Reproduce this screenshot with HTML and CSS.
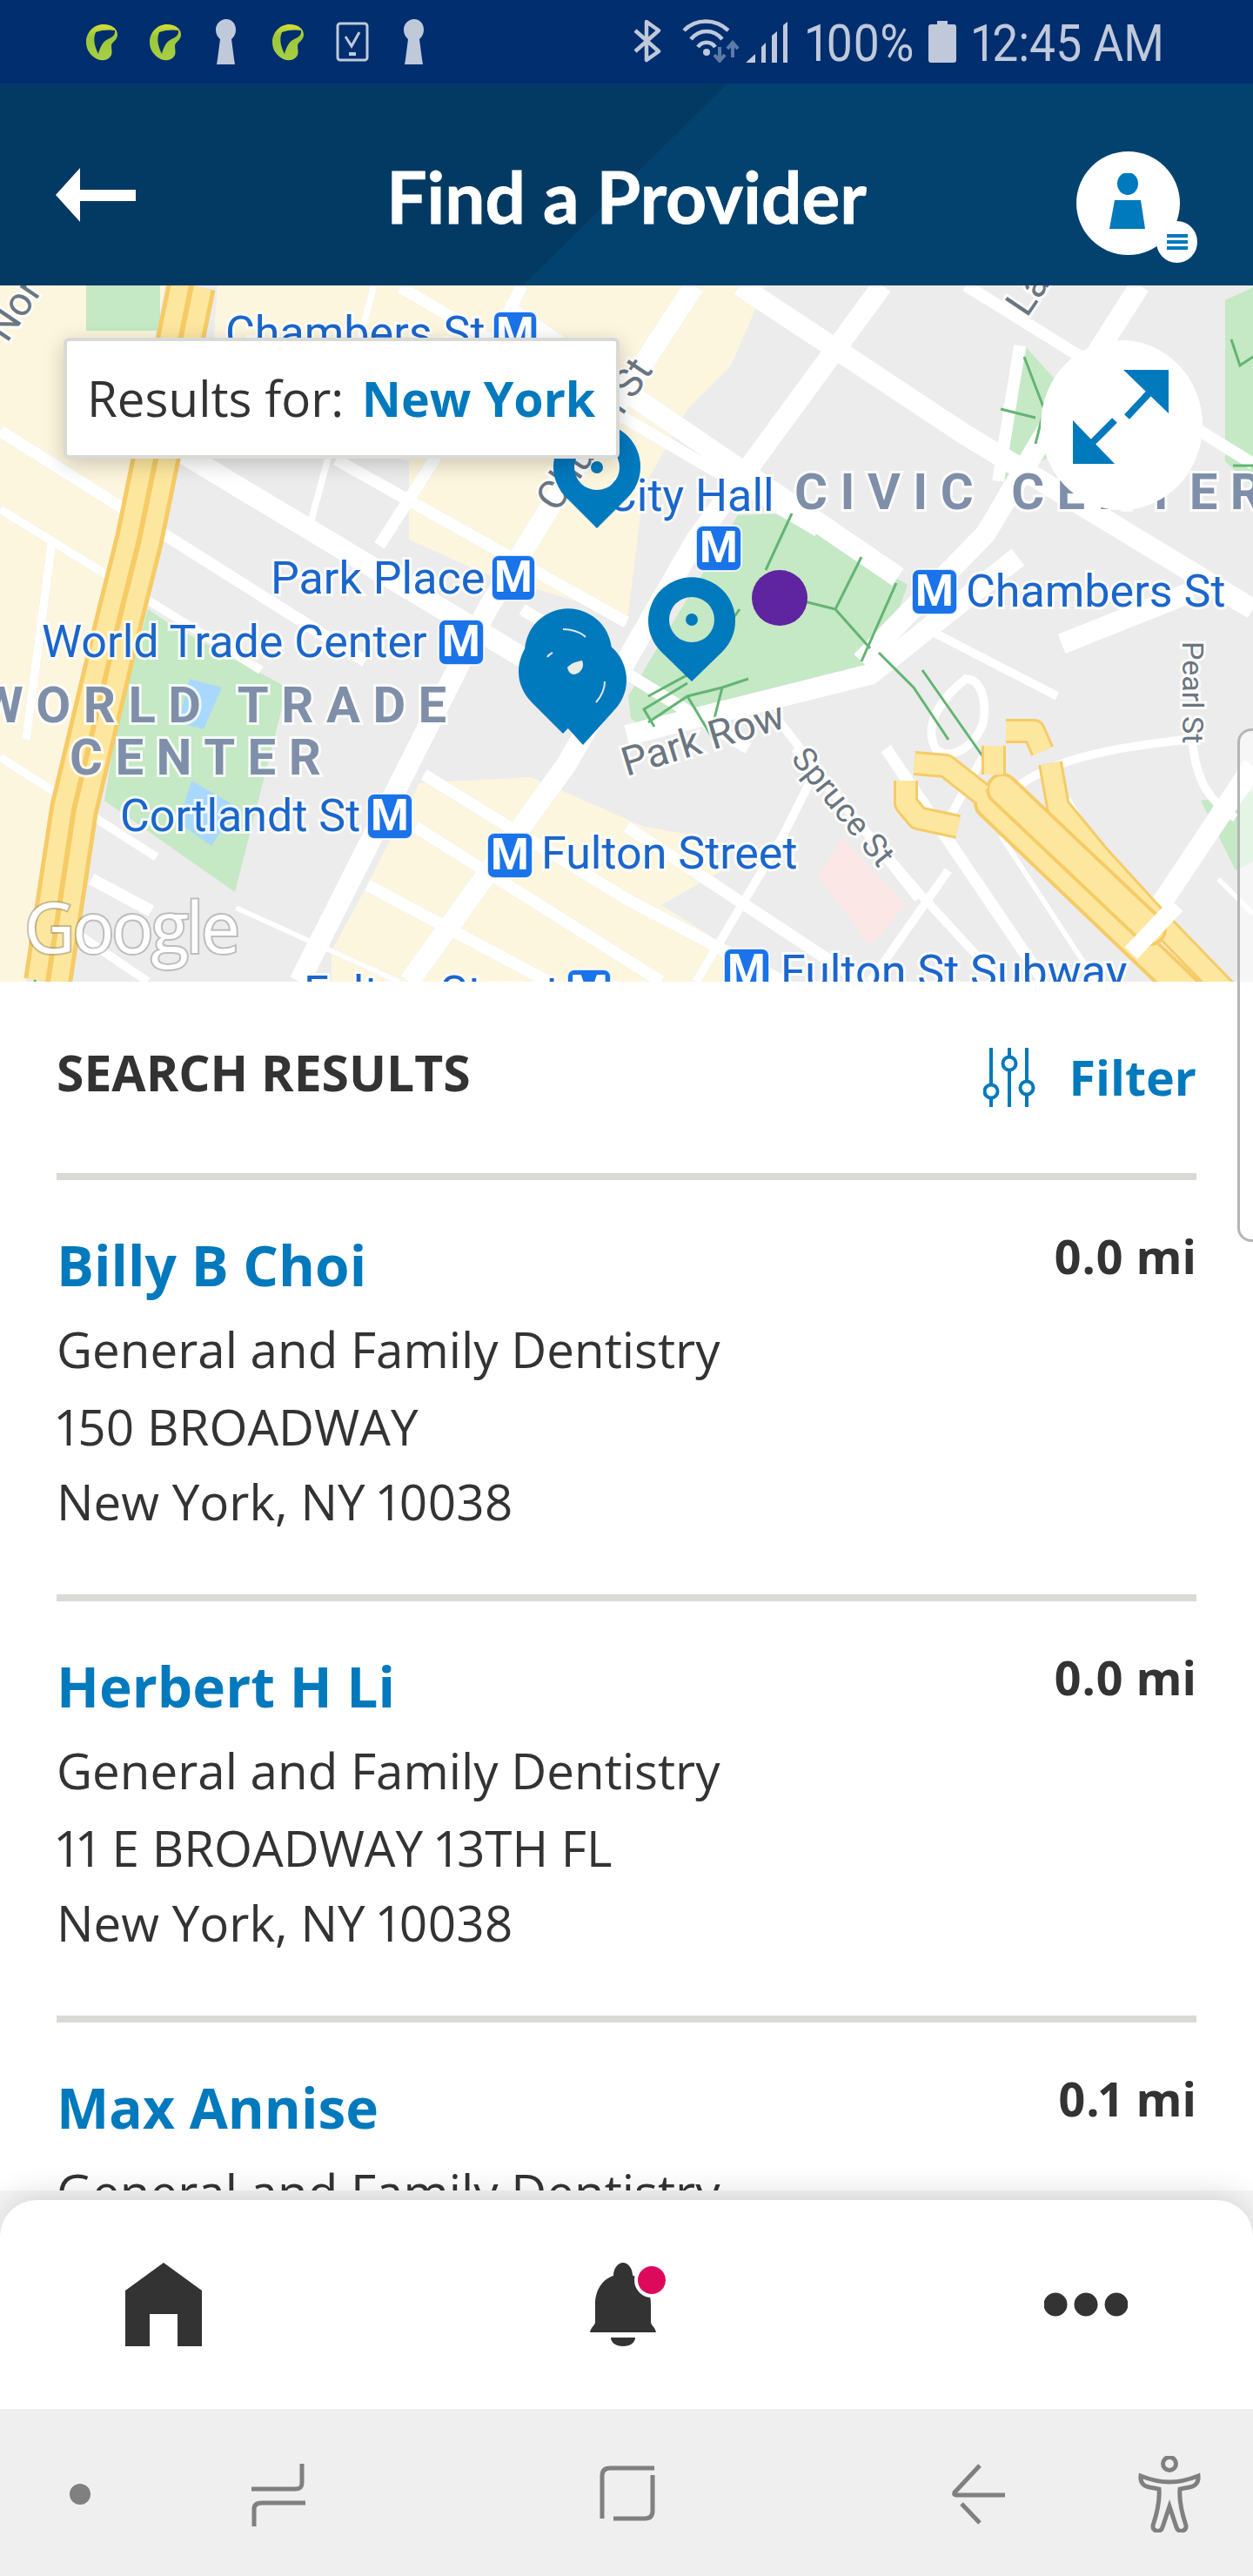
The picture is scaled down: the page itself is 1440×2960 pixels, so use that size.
FILE: index.html
```html
<!DOCTYPE html>
<html lang="en">
<head>
  <meta charset="UTF-8">
  <title>Find a Provider</title>
  <link rel="stylesheet" href="styles.css">
</head>
<body>
<div class="phone">

  <!-- status bar -->
  <div class="status">
    <div class="status-left">
      <svg class="st-swirl" viewBox="0 0 36 42"><defs><linearGradient id="leaf" x1="0" y1="0" x2="0" y2="1"><stop offset="0" stop-color="#d6e033"/><stop offset=".35" stop-color="#9cc63a"/><stop offset="1" stop-color="#a9cf45"/></linearGradient></defs><path class="swirl" d="M20 0C30 0 36 5 36 12 36 18 30 20 29 24 29 30 31 34 27 38 22 43 14 42 8 37 2 32 0 26 0 20 0 10 8 0 20 0z"/><path class="swirl-in" d="M11 9C18 6 28 6 33 7 34 13 29 15 25 17 19 20 16 26 14 34 11 28 7 18 11 9z"/></svg>
      <svg class="st-swirl" viewBox="0 0 36 42"><path class="swirl" d="M20 0C30 0 36 5 36 12 36 18 30 20 29 24 29 30 31 34 27 38 22 43 14 42 8 37 2 32 0 26 0 20 0 10 8 0 20 0z"/><path class="swirl-in" d="M11 9C18 6 28 6 33 7 34 13 29 15 25 17 19 20 16 26 14 34 11 28 7 18 11 9z"/></svg>
      <svg class="st-key" viewBox="0 0 30 52"><path d="M15 0c7 0 11 6 11 12 0 6-3 9-5 11l3 23 1 6H4l1-6 3-23c-2-2-5-5-5-11C3 6 8 0 15 0z"/></svg>
      <svg class="st-swirl" viewBox="0 0 36 42"><path class="swirl" d="M20 0C30 0 36 5 36 12 36 18 30 20 29 24 29 30 31 34 27 38 22 43 14 42 8 37 2 32 0 26 0 20 0 10 8 0 20 0z"/><path class="swirl-in" d="M11 9C18 6 28 6 33 7 34 13 29 15 25 17 19 20 16 26 14 34 11 28 7 18 11 9z"/></svg>
      <svg class="st-check" viewBox="0 0 38 46"><rect x="2" y="2" width="34" height="42" rx="3"/><path d="M11 17l7 11 9-16"/><rect class="st-fill" x="15" y="35" width="8" height="4"/></svg>
      <svg class="st-key" viewBox="0 0 30 52"><path d="M15 0c7 0 11 6 11 12 0 6-3 9-5 11l3 23 1 6H4l1-6 3-23c-2-2-5-5-5-11C3 6 8 0 15 0z"/></svg>
    </div>
    <div class="status-right">
      <svg class="st-bt" viewBox="0 0 32 50"><path d="M2 13L29 37 15 47V3L29 13 2 37"/></svg>
      <svg class="st-wifi" viewBox="0 0 66 50"><path d="M3 13C17-1 39-1 54 13M11 23C21 11 37 11 47 23M19 32C24 25 34 25 39 32"/><circle class="st-fill" cx="29" cy="38" r="4"/><path class="st-arrows" d="M44 32V48M38 41L44 48 50 41M59 44V28M53 34L59 27 65 34"/></svg>
      <svg class="st-signal" viewBox="0 0 48 48"><path d="M0 48L11 38V48zM18 48V30L23 25V48zM30 48V17L36 12V48zM43 48V5L48 1V48z"/></svg>
      <span class="st-text st-pct">100%</span>
      <svg class="st-batt" viewBox="0 0 32 48"><path d="M10 0h12v4h7c2 0 3 1 3 3v38c0 2-1 3-3 3H3c-2 0-3-1-3-3V7c0-2 1-3 3-3h7z"/></svg>
      <span class="st-text st-time">12:45 AM</span>
    </div>
  </div>

  <!-- app header -->
  <header class="topbar">
    <svg class="back" viewBox="0 0 92 62"><path d="M28 0L0 31l28 31V38h64V25H28z"/></svg>
    <h1>Find a Provider</h1>
    <div class="avatar">
      <svg viewBox="0 0 42 64"><ellipse cx="21" cy="12" rx="12" ry="13"/><path d="M6 31h30l5 33H0z"/></svg>
      <span class="avatar-badge"><i></i><i></i><i></i></span>
    </div>
  </header>

  <!-- map -->
  <section class="map">
    <svg class="map-svg" viewBox="0 328 1440 800">
      <defs>
        <g id="roads">
          <path class="w14" d="M0 495L420 760"/>
          <path class="w24" d="M200 515L700 815"/>
          <path class="w14" d="M386 528L720 715"/>
          <path class="w14" d="M460 330L940 610"/>
          <path class="w24" d="M580 355L1032 663"/>
          <path class="w24" d="M850 328L1110 500 1440 700"/>
          <path class="w14" d="M1110 328L1440 533"/>
          <path class="w10" d="M0 585L138 670 300 770"/>
          <path class="w10" d="M0 870L180 985"/>
          <path class="w14" d="M487 890L720 1033 900 1128"/>
          <path class="w14" d="M422 1017L630 1128"/>
          <path class="w14" d="M477 950L760 1128"/>
          <path class="w14" d="M105 1010L174 1047"/>
          <path class="w6" d="M271 1043L459 1128"/>
          <path class="w14" d="M600 700L860 860"/>
          <path class="w14" d="M720 950L990 1128"/>
          <path class="w24" d="M470 1128L650 880 800 620 1014 328"/>
          <path class="w24" d="M344 1128L560 700 640 570 798 328"/>
          <path class="w8" d="M358 597L376 530 430 328"/>
          <path class="w14" d="M436 627L496 533 600 328"/>
          <path class="w24" d="M990 760L1133 613 1200 500 1310 328"/>
          <path class="w14" d="M1147 553L1172 397"/>
          <path class="w24" d="M1300 1090L1440 880"/>
          <path class="w10" d="M913 860L1060 1030 1150 1128"/>
          <path class="w10" d="M894 827L1055 1033"/>
          <path class="w10" d="M800 1128L900 960 940 880"/>
          <path class="w10" d="M1000 1128L1090 1000"/>
          <path class="w10" d="M1080 960L1135 860"/>
          <path class="w14" d="M1018 860L1200 1128"/>
          <path class="w6" d="M1150 960L1260 1128"/>
          <path class="w14" d="M1224 920L1350 1128"/>
          <path class="w10" d="M1150 920C1200 870 1280 860 1360 850"/>
          <path class="w10" d="M1370 850C1375 900 1390 920 1420 940"/>
          <path class="w6" d="M1400 1010L1440 1050"/>
          <path class="w24" d="M720 845L1000 775 1170 640"/>
          <path class="w24" d="M1220 740L1370 680"/>
          <path class="w10" d="M60 620L30 850"/>
          <path class="w10" d="M40 1040L170 1128"/>
          <path class="w10" d="M1060 720L1215 800"/>
          <path class="w10" d="M1110 780C1085 800 1060 830 1075 860 1090 875 1120 860 1130 830 1135 800 1125 780 1110 780z"/>
        </g>
      </defs>

      <rect x="0" y="328" width="1440" height="800" class="m-bg"/>
      <path class="m-beige" d="M0 328H190L30 1128H0z"/>
      <path class="m-beige" d="M250 328H880L840 420 790 470 740 560 720 720 660 690 560 660 470 620V530L240 470z"/>
      <path class="m-beige" d="M381 1128V1093L422 1017 482 900 610 893 740 950 800 960 830 1000 760 1040 900 1128z"/>
      <path class="m-pink" d="M940 1007L968 963 1041 1040 1000 1088z"/>

      <path class="m-green" d="M99 328H184V380H99z"/>
      <path class="m-green" d="M200 720L330 790 270 1025 120 920 135 830 170 700z"/>
      <path class="m-green" d="M848 592L905 590 1043 672 1014 753 968 783 748 845 725 825 722 800z"/>
      <path class="m-green" d="M1180 400L1225 450 1215 520 1150 555z"/>
      <path class="m-green" d="M1408 345L1440 330V560L1408 530z"/>
      <path class="m-green" d="M1380 920L1440 910V990L1420 1000z"/>
      <path class="m-water" d="M218 780L255 790 234 838 205 830z"/>
      <path class="m-water" d="M220 897L272 927 243 972 205 945z"/>

      <use href="#roads" class="road-case"/>
      <use href="#roads" class="road-top"/>

      <!-- park paths -->
      <path class="m-path" d="M910 590L880 655M990 640L960 700 1000 745M1030 670L990 760M880 680L960 700M745 830L790 800 830 790 860 780M790 800L820 850M830 790L816 845M745 800L800 770 850 700M752 835L740 815 790 785M1010 750L1050 790 1090 850M1060 770L1130 870"/>
      <path class="m-path" d="M1177 410L1200 470 1190 510M1190 480L1150 470M1415 390L1425 420 1440 410M1417 535H1440"/>
      <path class="m-path" d="M198 328L185 400 140 640 100 850 40 1128"/>

      <!-- highways -->
      <path class="hw-case" d="M220 328L160 620 135 720 85 930 55 1128"/>
      <path class="hw-fill" d="M220 328L160 620 135 720 85 930 55 1128"/>
      <path class="hw-line" d="M220 328L160 620 135 720 85 930 55 1128"/>
      <path class="hw-case thin" d="M1207 877L1216 927 1262 983 1326 1053 1410 1140"/>
      <path class="hw-fill thin" d="M1207 877L1216 927 1262 983 1326 1053 1410 1140"/>
      <path class="hw-case mid" d="M1138 923L1365 1140"/>
      <path class="hw-fill mid" d="M1138 923L1365 1140"/>
      <path class="hw-case mid" d="M1152 907L1322 1068"/>
      <path class="hw-fill mid" d="M1152 907L1322 1068"/>
      <path class="hw-case thin" d="M1051 877L1087 880 1129 913"/>
      <path class="hw-fill thin" d="M1051 877L1087 880 1129 913"/>
      <path class="hw-case thin" d="M1142 857V890M1156 840H1188L1198 863"/>
      <path class="hw-fill thin" d="M1142 857V890M1156 840H1188L1198 863"/>
      <path class="hw-case thin" d="M1041 897V923L1055 940 1101 950"/>
      <path class="hw-fill thin" d="M1041 897V923L1055 940 1101 950"/>
      <path class="road-over" d="M1300 1095L1352 1040"/>

      <!-- labels -->
      <text class="lbl-st" x="259" y="400">Chambers St</text>
      <rect class="m-box" x="567" y="358" width="50" height="52" rx="8"/><text class="m-m" x="592" y="400">M</text>
      <text class="lbl-st" x="311" y="682">Park Place</text>
      <rect class="m-box" x="565" y="638" width="50" height="52" rx="8"/><text class="m-m" x="590" y="680">M</text>
      <text class="lbl-st" x="48" y="755">World Trade Center</text>
      <rect class="m-box" x="504" y="712" width="52" height="52" rx="8"/><text class="m-m" x="530" y="754">M</text>
      <text class="lbl-area" x="-24" y="830">WORLD TRADE</text>
      <text class="lbl-area" x="80" y="890">CENTER</text>
      <text class="lbl-st" x="138" y="955">Cortlandt St</text>
      <rect class="m-box" x="422" y="912" width="52" height="52" rx="8"/><text class="m-m" x="448" y="954">M</text>
      <rect class="m-box" x="560" y="957" width="52" height="52" rx="8"/><text class="m-m" x="586" y="999">M</text>
      <text class="lbl-st" x="622" y="998">Fulton Street</text>
      <rect class="m-box" x="832" y="1090" width="52" height="52" rx="8"/><text class="m-m" x="858" y="1132">M</text>
      <text class="lbl-st" x="897" y="1134">Fulton St Subway</text>
      <text class="lbl-st" x="349" y="1158">Fulton Street</text>
      <rect class="m-box" x="652" y="1114" width="50" height="52" rx="8"/><text class="m-m" x="677" y="1156">M</text>
      <text class="lbl-st" x="698" y="587">City Hall</text>
      <rect class="m-box" x="800" y="604" width="52" height="52" rx="8"/><text class="m-m" x="826" y="646">M</text>
      <text class="lbl-area" x="913" y="585">CIVIC CENTER</text>
      <rect class="m-box" x="1048" y="654" width="52" height="52" rx="8"/><text class="m-m" x="1074" y="696">M</text>
      <text class="lbl-st" x="1110" y="697">Chambers St</text>
      <text class="lbl-road" transform="translate(720 892) rotate(-17)">Park Row</text>
      <text class="lbl-road small" transform="translate(908 872) rotate(51)">Spruce St</text>
      <text class="lbl-road tiny" transform="translate(1359 737) rotate(90)">Pearl St</text>
      <text class="lbl-road" transform="translate(640 590) rotate(-56)">Church St</text>
      <text class="lbl-road" transform="translate(1180 366) rotate(-56)">Lafayette St</text>
      <text class="lbl-road" transform="translate(8 395) rotate(-56)">North</text>
      <text class="lbl-google" x="28" y="1095">Google</text>

      <!-- pins -->
      <path class="pin" fill-rule="evenodd" d="M686 607L651 572A50 50 0 1 1 721 572zM686 511A26 26 0 1 0 686 563A26 26 0 1 0 686 511zM679 537A7 7 0 1 0 693 537A7 7 0 1 0 679 537z"/>
      <path class="pin" fill-rule="evenodd" d="M795 783L760 749A50 50 0 1 1 830 749zM795 686A26 26 0 1 0 795 738A26 26 0 1 0 795 686zM788 712A7 7 0 1 0 802 712A7 7 0 1 0 788 712z"/>
      <path class="pin" d="M653 821L618 785A50 50 0 1 1 688 785z"/>
      <path class="pin" d="M647 843L611 807A50 50 0 1 1 681 807z"/>
      <path class="pin" d="M670 856L635 817A50 50 0 1 1 705 817z"/>
      <path class="pin-fleck" d="M652 767C656 762 663 760 669 759 672 766 668 773 660 775 656 775 653 772 652 767z"/>
      <path class="pin-arc" d="M647 723C656 723 667 726 673 732M629 755C630 753 633 751 635 750M695 783C695 792 691 800 685 807"/>
      <ellipse class="pin-purple" cx="896" cy="687" rx="32" ry="32"/>
    </svg>

    <div class="results-for">Results for: <b>New York</b></div>

    <div class="expand">
      <svg viewBox="0 0 110 110"><path d="M58 0H110V50zM48 108H0V58z"/><path class="expand-line" d="M90 24L62 54M48 58L20 86"/></svg>
    </div>
  </section>

  <div class="edge-handle"></div>

  <!-- results -->
  <section class="results">
    <div class="results-head">
      <h2>SEARCH RESULTS</h2>
      <div class="filter">
        <svg viewBox="0 0 60 68"><path d="M9 0v41M9 59v9M30 0v9M30 27v41M50 0v37M50 55v13"/><circle cx="9" cy="50" r="7.500"/><circle cx="30" cy="18" r="7.500"/><circle cx="50" cy="46" r="7.500"/></svg>
        <span>Filter</span>
      </div>
    </div>

    <div class="result">
      <div class="result-top"><a class="name">Billy B Choi</a><span class="dist">0.0 mi</span></div>
      <p>General and Family Dentistry</p>
      <p>150 BROADWAY</p>
      <p>New York, NY 10038</p>
    </div>
    <div class="result">
      <div class="result-top"><a class="name">Herbert H Li</a><span class="dist">0.0 mi</span></div>
      <p>General and Family Dentistry</p>
      <p>11 E BROADWAY 13TH FL</p>
      <p>New York, NY 10038</p>
    </div>
    <div class="result">
      <div class="result-top"><a class="name">Max Annise</a><span class="dist">0.1 mi</span></div>
      <p>General and Family Dentistry</p>
    </div>
  </section>

  <!-- bottom tabs + android buttons, sits over the list -->
  <div class="bottom">
    <nav class="tabs">
      <svg class="tab-home" viewBox="0 0 88 96"><path d="M44 0L88 32V96H60V59H28V96H0V32z"/></svg>
      <svg class="tab-bell" viewBox="0 0 90 96"><path d="M27 15a11 11 0 0 1 0-.5C27 7 32 0 38 0s11 7 11 14.500C62 19 70 32 70 48v20c0 4 5 6 6 12H0c1-6 6-8 6-12V48c0-16 8-29 21-33z"/><path d="M24 86h28c0 6-6 10-14 10s-14-4-14-10z"/><circle class="bell-dot" cx="71" cy="20" r="18"/></svg>
      <svg class="tab-more" viewBox="0 0 96 28"><circle cx="13" cy="14" r="13.500"/><circle cx="48" cy="14" r="13.500"/><circle cx="83" cy="14" r="13.500"/></svg>
    </nav>
    <div class="sysbar">
      <svg class="sys-dot" viewBox="0 0 24 24"><circle cx="12" cy="12" r="12"/></svg>
      <svg class="sys-recent" viewBox="0 0 62 72"><path d="M58 0V22C58 28 55 29 50 29H0M62 45H12C6 45 3 47 3 52V72"/></svg>
      <svg class="sys-home" viewBox="0 0 64 66"><path d="M63 5H12C6 5 3 8 3 14V63M61 13V54C61 60 58 63 52 63H16"/></svg>
      <svg class="sys-back" viewBox="0 0 62 70"><path d="M33 2L4 33C3 35 4 36 6 36H62M12 46L33 68"/></svg>
      <svg class="sys-acc" viewBox="0 0 74 88"><circle cx="37" cy="9" r="7.500"/><path d="M4 23C3 31 8 35 14 36L25 38C26 50 22 68 18 80 17 87 27 89 29 82L37 58 45 82C47 89 57 87 56 80 52 68 48 50 49 38L60 36C66 35 71 31 70 23 60 27 48 30 37 30 26 30 14 27 4 23z"/></svg>
    </div>
  </div>

</div>
</body>
</html>
```

FILE: styles.css
```css
* {
  box-sizing: border-box;
}
html, body {
  margin: 0;
  padding: 0;
  background: #fff;
}
.phone {
  position: relative;
  width: 1440px;
  height: 2960px;
  overflow: hidden;
  font-family: "Open Sans", "Noto Sans", sans-serif;
  font-variant-numeric: proportional-nums;
  color: #333;
}

/* status bar */
.status {
  height: 96px;
  background: #012e6f;
  display: flex;
  justify-content: space-between;
  align-items: flex-start;
  padding: 22px 99px 0;
}
.status-left {
  display: flex;
  gap: 36px;
  align-items: flex-start;
  width: 392px;
  justify-content: space-between;
}
.status-right {
  display: flex;
  align-items: flex-start;
  position: relative;
}
.status svg {
  display: block;
  flex: none;
}
.st-swirl {
  width: 36px;
  height: 42px;
  margin-top: 6px;
}
.swirl {
  fill: url(#leaf);
}
.swirl-in {
  fill: #012e6f;
}
.st-key {
  width: 30px;
  height: 52px;
  fill: #bfc9da;
}
.st-check {
  width: 38px;
  height: 46px;
  margin-top: 3px;
  fill: none;
  stroke: #bfc9da;
  stroke-width: 3;
}
.st-check .st-fill {
  fill: #bfc9da;
  stroke: none;
}
.st-bt {
  width: 32px;
  height: 50px;
  margin-left: -96px;
  fill: none;
  stroke: #bfc9da;
  stroke-width: 4.500;
  stroke-linejoin: round;
}
.st-wifi {
  width: 66px;
  height: 50px;
  margin-left: 23px;
  fill: none;
  stroke: #bfc9da;
  stroke-width: 4.500;
}
.st-wifi .st-fill {
  fill: #bfc9da;
  stroke: none;
}
.st-wifi .st-arrows {
  stroke: #5d7ba6;
  stroke-width: 4;
}
.st-signal {
  width: 48px;
  height: 48px;
  margin-top: 2px;
  margin-left: 8px;
  fill: #bfc9da;
}
.st-text {
  font-family: Roboto, sans-serif;
  font-size: 60px;
  line-height: 60px;
  color: #bfc9da;
  white-space: nowrap;
  transform-origin: left top;
  transform: scaleX(.89);
}
.st-pct {
  width: 123px;
  margin-left: 21px;
  margin-top: -2px;
}
.st-batt {
  width: 32px;
  height: 48px;
  margin-left: 18px;
  margin-top: 2px;
  fill: #bfc9da;
}
.st-time {
  width: 224px;
  margin-left: 18px;
  margin-top: -2px;
}

/* header */
.topbar {
  position: relative;
  height: 232px;
  background: #033a63;
  display: flex;
  align-items: center;
  justify-content: center;
}
.topbar::before {
  content: "";
  position: absolute;
  inset: 0;
  background: #03426f;
  clip-path: polygon(836px 0, 100% 0, 100% 100%, 601px 100%);
}
.topbar h1 {
  position: relative;
  margin: 26px 0 0;
  font-family: Lato, sans-serif;
  font-weight: 700;
  font-size: 82px;
  color: #fff;
  -webkit-text-stroke: .8px #fff;
}
.back {
  position: absolute;
  left: 64px;
  top: 97px;
  width: 92px;
  height: 62px;
  fill: #fff;
}
.avatar {
  position: absolute;
  left: 1237px;
  top: 78px;
  width: 119px;
  height: 119px;
  border-radius: 50%;
  background: #fff;
}
.avatar svg {
  position: absolute;
  left: 38px;
  top: 25px;
  width: 42px;
  height: 64px;
  fill: #0079bd;
}
.avatar-badge {
  position: absolute;
  left: 92px;
  top: 80px;
  width: 47px;
  height: 48px;
  border-radius: 50%;
  background: #fff;
  display: flex;
  flex-direction: column;
  align-items: center;
  justify-content: center;
  gap: 3px;
}
.avatar-badge i {
  width: 24px;
  height: 4px;
  background: #0079bd;
}

/* map */
.map {
  position: relative;
  height: 800px;
  overflow: hidden;
}
.map-svg {
  display: block;
  width: 1440px;
  height: 800px;
}
.m-bg {
  fill: #ececec;
}
.m-beige {
  fill: #fdf6de;
}
.m-pink {
  fill: #fbe8e6;
}
.m-green {
  fill: #c5e8c5;
}
.m-water {
  fill: #a9d8fd;
}
.road-case {
  stroke: #d9dbe3;
  fill: none;
}
.road-top {
  stroke: #fff;
  fill: none;
}
.road-over {
  fill: none;
  stroke: #fff;
  stroke-width: 20px;
}
.w6 {
  stroke-width: 6px;
}
.w8 {
  stroke-width: 8px;
}
.w10 {
  stroke-width: 10px;
}
.w14 {
  stroke-width: 14px;
}
.w24 {
  stroke-width: 24px;
}
.m-path {
  fill: none;
  stroke: #62b573;
  stroke-width: 3;
}
.hw-case {
  fill: none;
  stroke: #f6cb66;
  stroke-width: 56px;
  stroke-linejoin: round;
}
.hw-fill {
  fill: none;
  stroke: #fde79f;
  stroke-width: 46px;
  stroke-linejoin: round;
}
.hw-line {
  fill: none;
  stroke: #f6cb66;
  stroke-width: 6px;
}
.hw-case.thin {
  stroke-width: 28px;
}
.hw-fill.thin {
  stroke-width: 22px;
}
.hw-case.mid {
  stroke-width: 38px;
  stroke-linecap: round;
}
.hw-fill.mid {
  stroke-width: 30px;
  stroke-linecap: round;
}
.lbl-st {
  font-family: Roboto, sans-serif;
  font-size: 52px;
  fill: #1a66cc;
  stroke: rgba(255, 255, 255, .8);
  stroke-width: 6px;
  paint-order: stroke;
}
.lbl-area {
  font-family: Roboto, sans-serif;
  font-weight: 700;
  font-size: 58px;
  letter-spacing: 14.500px;
  fill: #7f8fa9;
  stroke: rgba(255, 255, 255, .8);
  stroke-width: 6px;
  paint-order: stroke;
}
.lbl-road {
  font-family: Roboto, sans-serif;
  font-size: 46px;
  fill: #6b7680;
  stroke: rgba(255, 255, 255, .85);
  stroke-width: 6px;
  paint-order: stroke;
}
.lbl-road.small {
  font-size: 38px;
}
.lbl-road.tiny {
  font-size: 34px;
}
.lbl-google {
  font-family: "Open Sans", sans-serif;
  font-size: 80px;
  fill: #fff;
  stroke: rgba(120, 120, 120, .4);
  stroke-width: 4px;
  paint-order: stroke;
  letter-spacing: -3px;
}
.m-box {
  fill: #1a73e8;
  stroke: rgba(255, 255, 255, .8);
  stroke-width: 2px;
}
.m-m {
  font-family: Roboto, sans-serif;
  font-weight: 700;
  font-size: 50px;
  fill: #fff;
  text-anchor: middle;
}
.pin {
  fill: #0079bd;
}
.pin-fleck {
  fill: #e8ebe6;
}
.pin-arc {
  fill: none;
  stroke: #dfe8ee;
  stroke-width: 2px;
}
.pin-purple {
  fill: #5f249f;
}
.results-for {
  position: absolute;
  left: 73px;
  top: 60px;
  width: 639px;
  height: 139px;
  background: #fff;
  border: 4px solid #d9d9d6;
  border-radius: 6px;
  box-shadow: 0 6px 24px rgba(0, 0, 0, .2);
  padding-left: 23px;
  font-size: 56.500px;
  line-height: 131px;
  white-space: nowrap;
}
.results-for b {
  color: #0079bd;
  font-weight: 700;
  font-size: 55.500px;
  margin-left: 6px;
}
.expand {
  position: absolute;
  left: 1196px;
  top: 63px;
  width: 186px;
  height: 195px;
  border-radius: 50%;
  background: #fff;
}
.expand svg {
  position: absolute;
  left: 37px;
  top: 34px;
  width: 110px;
  height: 110px;
  fill: #0079bd;
}
.expand-line {
  fill: none;
  stroke: #0079bd;
  stroke-width: 8px;
}
.edge-handle {
  position: absolute;
  left: 1422px;
  top: 837px;
  width: 40px;
  height: 590px;
  border: 3px solid #b5b5b5;
  border-radius: 16px;
  background: rgba(255, 255, 255, .55);
  z-index: 2;
}

/* results list */
.results {
  padding: 0 65px;
}
.results-head {
  display: flex;
  justify-content: space-between;
  height: 220px;
}
.results-head h2 {
  margin: 70px 0 0;
  font-size: 57px;
  line-height: 68px;
  font-weight: 700;
  color: #333;
}
.filter {
  display: flex;
  align-items: flex-start;
  color: #0079bd;
  font-size: 55.500px;
  font-weight: 700;
  padding-top: 76px;
}
.filter svg {
  width: 60px;
  height: 68px;
  margin-right: 39px;
  fill: none;
  stroke: #0079bd;
  stroke-width: 4px;
}
.filter span {
  line-height: 68px;
}
.result {
  height: 484px;
  border-top: 8px solid #d9d9d6;
  padding-top: 60px;
}
.result-top {
  display: flex;
  justify-content: space-between;
  align-items: flex-start;
  margin-bottom: 16px;
}
.name {
  color: #0079bd;
  font-size: 64px;
  line-height: 76px;
  font-weight: 700;
}
.dist {
  font-size: 54px;
  line-height: 70px;
  font-weight: 700;
  margin-top: -8px;
}
.result p {
  margin: 0;
  font-size: 56.500px;
  line-height: 86px;
}
.result-top + p {
  margin-bottom: 3px;
}

/* bottom tabs */
.bottom {
  position: absolute;
  left: 0;
  right: 0;
  top: 2528px;
  z-index: 3;
}
.bottom::before {
  content: "";
  position: absolute;
  left: 0;
  right: 0;
  top: -11px;
  height: 60px;
  background: #f6f6f6;
}
.tabs {
  position: relative;
  height: 240px;
  background: #fff;
  border-radius: 42px 42px 0 0;
  box-shadow: 0 -6px 36px rgba(0, 0, 0, .14);
}
.tabs svg {
  position: absolute;
  fill: #333;
}
.tab-home {
  left: 144px;
  top: 72px;
  width: 88px;
  height: 96px;
}
.tab-bell {
  left: 678px;
  top: 72px;
  width: 90px;
  height: 96px;
}
.bell-dot {
  fill: #dd0a5c;
  stroke: #fff;
  stroke-width: 4px;
}
.tab-more {
  left: 1200px;
  top: 106px;
  width: 96px;
  height: 28px;
}
.sysbar {
  position: relative;
  height: 192px;
  background: #efefef;
}
.sysbar svg {
  position: absolute;
  fill: none;
  stroke: #808080;
  stroke-width: 5px;
}
.sys-dot {
  left: 80px;
  top: 86px;
  width: 24px;
  height: 24px;
}
.sysbar .sys-dot {
  fill: #808080;
  stroke: none;
}
.sys-recent {
  left: 289px;
  top: 63px;
  width: 62px;
  height: 72px;
}
.sys-home {
  left: 689px;
  top: 63px;
  width: 64px;
  height: 66px;
}
.sys-back {
  left: 1093px;
  top: 63px;
  width: 62px;
  height: 70px;
}
.sys-acc {
  left: 1307px;
  top: 54px;
  width: 74px;
  height: 88px;
}
```
